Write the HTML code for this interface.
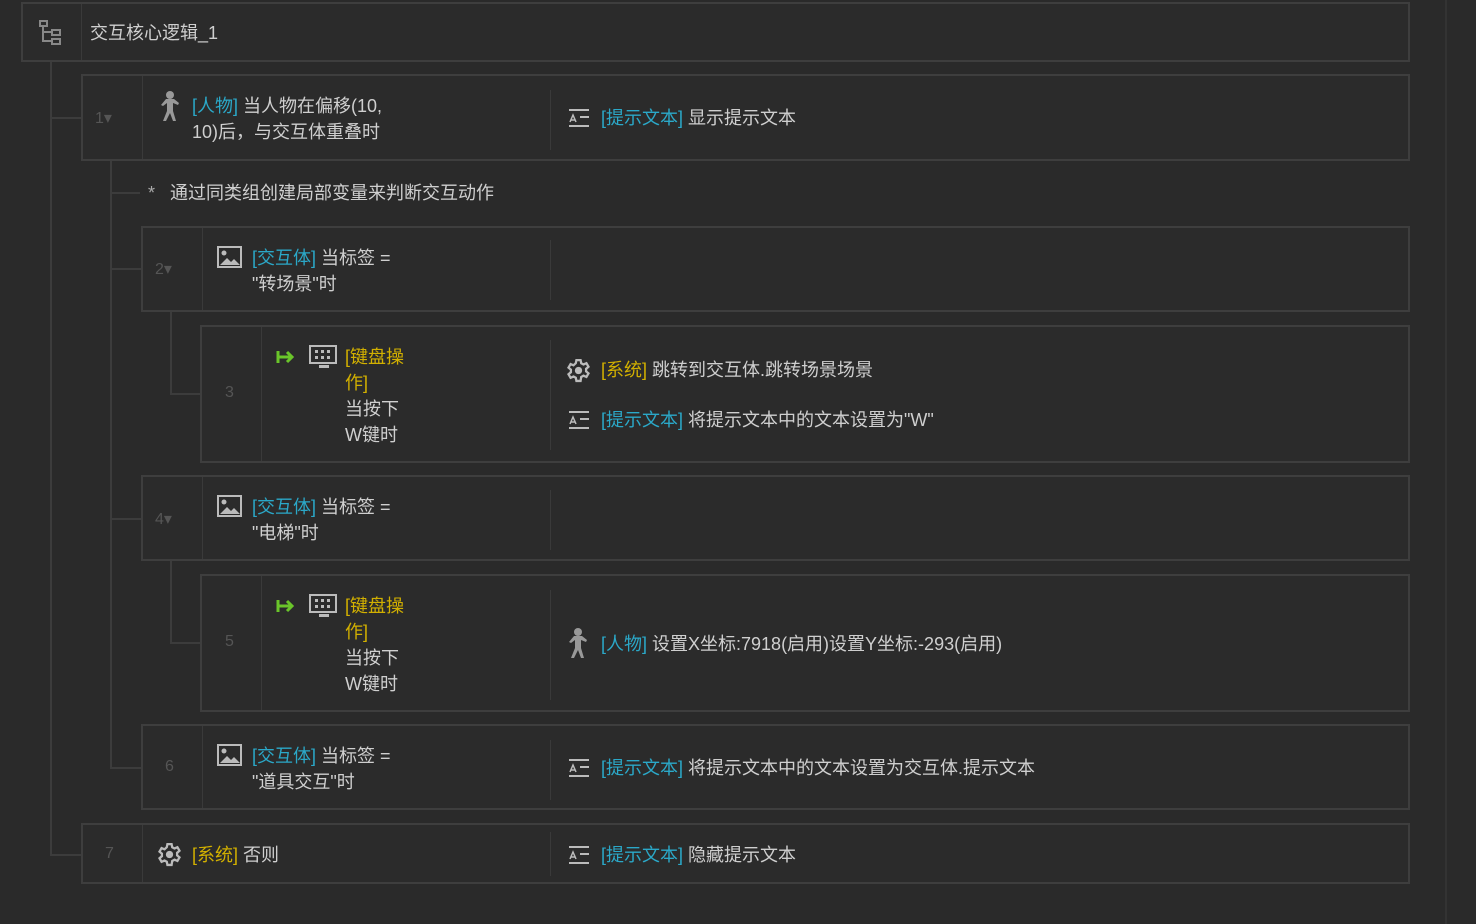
<!DOCTYPE html>
<html><head><meta charset="utf-8"><style>
body{margin:0;width:1476px;height:924px;background:#2a2a2a;overflow:hidden;position:relative;font-family:"Liberation Sans","Noto Sans CJK SC",sans-serif;font-size:18px;color:#cfcfcf}
.b{position:absolute;border:2px solid #3e3e3e;box-sizing:border-box;background:#2b2b2b}
.l{position:absolute;background:#3c3c3c}
.t{position:absolute;white-space:nowrap;line-height:26px}
.c{color:#2ba8c8}.y{color:#d2b000}
.n{position:absolute;color:#555;font-size:16px}
.v{position:absolute;width:1px;background:#3a3a3a}
svg{position:absolute}
</style></head><body>
<div class="l" style="left:1445px;top:0;width:2px;height:924px;background:#333"></div>
<div class="l" style="left:50px;top:61px;width:2px;height:795px"></div>
<div class="l" style="left:50px;top:117px;width:31px;height:2px"></div>
<div class="l" style="left:50px;top:854px;width:31px;height:2px"></div>
<div class="l" style="left:110px;top:160px;width:2px;height:609px"></div>
<div class="l" style="left:110px;top:192px;width:30px;height:2px"></div>
<div class="l" style="left:110px;top:268px;width:31px;height:2px"></div>
<div class="l" style="left:110px;top:518px;width:31px;height:2px"></div>
<div class="l" style="left:110px;top:767px;width:31px;height:2px"></div>
<div class="l" style="left:170px;top:311px;width:2px;height:84px"></div>
<div class="l" style="left:170px;top:393px;width:30px;height:2px"></div>
<div class="l" style="left:170px;top:560px;width:2px;height:84px"></div>
<div class="l" style="left:170px;top:642px;width:30px;height:2px"></div>

<div class="b" style="left:21px;top:2px;width:1389px;height:60px"></div>
<div class="v" style="left:81px;top:4px;height:56px"></div>
<svg style="left:38px;top:20px" width="28" height="26" viewBox="0 0 28 26"><g fill="none" stroke="#888" stroke-width="2"><rect x="2" y="1" width="7" height="5"/><rect x="14" y="10" width="8" height="5"/><rect x="14" y="19" width="8" height="5"/><path d="M5 6V21H14M5 12H14"/></g></svg>
<div class="t" style="left:90px;top:20px">交互核心逻辑_1</div>

<div class="b" style="left:81px;top:74px;width:1329px;height:87px"></div>
<div class="v" style="left:142px;top:76px;height:83px"></div>
<div class="v" style="left:550px;top:90px;height:60px"></div>
<div class="n" style="left:95px;top:108px">1▾</div>
<svg style="left:158px;top:90px" width="24" height="34" viewBox="0 0 24 34"><g fill="#999"><circle cx="12" cy="5" r="4"/><path d="M8 9h8l5 4-1 2-5-2v8l3 10h-3l-3-8-4 8H5l4-10V13l-4 3-2-1z"/></g></svg>
<div class="t" style="left:192px;top:93px"><span class="c">[人物]</span> 当人物在偏移(10,<br>10)后，与交互体重叠时</div>
<svg style="left:568px;top:108px" width="22" height="20" viewBox="0 0 22 20"><g fill="none" stroke="#bbb" stroke-width="2"><path d="M1 2h20M12 9h9M1 18h20"/><path d="M2 14l3-7 3 7M3 12h4" stroke-width="1.5"/></g></svg>
<div class="t" style="left:601px;top:105px"><span class="c">[提示文本]</span> 显示提示文本</div>

<div class="t" style="left:148px;top:180px;color:#aaa">*</div>
<div class="t" style="left:170px;top:180px">通过同类组创建局部变量来判断交互动作</div>

<div class="b" style="left:141px;top:226px;width:1269px;height:86px"></div>
<div class="v" style="left:202px;top:228px;height:82px"></div>
<div class="v" style="left:550px;top:240px;height:60px"></div>
<div class="n" style="left:155px;top:259px">2▾</div>
<svg style="left:217px;top:246px" width="25" height="22" viewBox="0 0 25 22"><rect x="1" y="1" width="23" height="20" fill="none" stroke="#bbb" stroke-width="2"/><circle cx="7" cy="7" r="2.5" fill="#bbb"/><path d="M3 19l7-7 4 4 3-3 6 6z" fill="#bbb"/></svg>
<div class="t" style="left:252px;top:245px"><span class="c">[交互体]</span> 当标签 =<br>"转场景"时</div>

<div class="b" style="left:200px;top:325px;width:1210px;height:138px"></div>
<div class="v" style="left:261px;top:327px;height:134px"></div>
<div class="v" style="left:550px;top:340px;height:110px"></div>
<div class="n" style="left:225px;top:384px">3</div>
<svg style="left:276px;top:348px" width="20" height="18" viewBox="0 0 20 18"><path d="M2 3v12M2 9h14M11 4l5 5-5 5" fill="none" stroke="#6ac52a" stroke-width="3"/></svg>
<svg style="left:309px;top:345px" width="28" height="24" viewBox="0 0 28 24"><rect x="1" y="1" width="26" height="17" fill="none" stroke="#bbb" stroke-width="2"/><g fill="#bbb"><rect x="6" y="5" width="3" height="3"/><rect x="12" y="5" width="3" height="3"/><rect x="18" y="5" width="3" height="3"/><rect x="6" y="11" width="3" height="3"/><rect x="12" y="11" width="3" height="3"/><rect x="18" y="11" width="3" height="3"/><rect x="10" y="20" width="10" height="3"/></g></svg>
<div class="t" style="left:345px;top:344px"><span class="y">[键盘操<br>作]</span><br>当按下<br>W键时</div>
<svg style="left:566px;top:358px" width="25" height="25" viewBox="0 0 24 24"><path fill="none" stroke="#bbb" stroke-width="2.2" d="M10 2h4l.6 3 2.2 1.2 2.8-1.2 2 3.4-2.3 2v2.4l2.3 2-2 3.4-2.8-1.2-2.2 1.2L14 22h-4l-.6-3-2.2-1.2-2.8 1.2-2-3.4 2.3-2v-2.4l-2.3-2 2-3.4 2.8 1.2L9.4 5z"/><circle cx="12" cy="12" r="3.5" fill="#bbb"/></svg>
<div class="t" style="left:601px;top:357px"><span class="y">[系统]</span> 跳转到交互体.跳转场景场景</div>
<svg style="left:568px;top:410px" width="22" height="20" viewBox="0 0 22 20"><g fill="none" stroke="#bbb" stroke-width="2"><path d="M1 2h20M12 9h9M1 18h20"/><path d="M2 14l3-7 3 7M3 12h4" stroke-width="1.5"/></g></svg>
<div class="t" style="left:601px;top:407px"><span class="c">[提示文本]</span> 将提示文本中的文本设置为"W"</div>

<div class="b" style="left:141px;top:475px;width:1269px;height:86px"></div>
<div class="v" style="left:202px;top:477px;height:82px"></div>
<div class="v" style="left:550px;top:490px;height:60px"></div>
<div class="n" style="left:155px;top:509px">4▾</div>
<svg style="left:217px;top:495px" width="25" height="22" viewBox="0 0 25 22"><rect x="1" y="1" width="23" height="20" fill="none" stroke="#bbb" stroke-width="2"/><circle cx="7" cy="7" r="2.5" fill="#bbb"/><path d="M3 19l7-7 4 4 3-3 6 6z" fill="#bbb"/></svg>
<div class="t" style="left:252px;top:494px"><span class="c">[交互体]</span> 当标签 =<br>"电梯"时</div>

<div class="b" style="left:200px;top:574px;width:1210px;height:138px"></div>
<div class="v" style="left:261px;top:576px;height:134px"></div>
<div class="v" style="left:550px;top:590px;height:110px"></div>
<div class="n" style="left:225px;top:633px">5</div>
<svg style="left:276px;top:597px" width="20" height="18" viewBox="0 0 20 18"><path d="M2 3v12M2 9h14M11 4l5 5-5 5" fill="none" stroke="#6ac52a" stroke-width="3"/></svg>
<svg style="left:309px;top:594px" width="28" height="24" viewBox="0 0 28 24"><rect x="1" y="1" width="26" height="17" fill="none" stroke="#bbb" stroke-width="2"/><g fill="#bbb"><rect x="6" y="5" width="3" height="3"/><rect x="12" y="5" width="3" height="3"/><rect x="18" y="5" width="3" height="3"/><rect x="6" y="11" width="3" height="3"/><rect x="12" y="11" width="3" height="3"/><rect x="18" y="11" width="3" height="3"/><rect x="10" y="20" width="10" height="3"/></g></svg>
<div class="t" style="left:345px;top:593px"><span class="y">[键盘操<br>作]</span><br>当按下<br>W键时</div>
<svg style="left:566px;top:627px" width="24" height="34" viewBox="0 0 24 34"><g fill="#999"><circle cx="12" cy="5" r="4"/><path d="M8 9h8l5 4-1 2-5-2v8l3 10h-3l-3-8-4 8H5l4-10V13l-4 3-2-1z"/></g></svg>
<div class="t" style="left:601px;top:631px"><span class="c">[人物]</span> 设置X坐标:7918(启用)设置Y坐标:-293(启用)</div>

<div class="b" style="left:141px;top:724px;width:1269px;height:86px"></div>
<div class="v" style="left:202px;top:726px;height:82px"></div>
<div class="v" style="left:550px;top:740px;height:60px"></div>
<div class="n" style="left:165px;top:758px">6</div>
<svg style="left:217px;top:744px" width="25" height="22" viewBox="0 0 25 22"><rect x="1" y="1" width="23" height="20" fill="none" stroke="#bbb" stroke-width="2"/><circle cx="7" cy="7" r="2.5" fill="#bbb"/><path d="M3 19l7-7 4 4 3-3 6 6z" fill="#bbb"/></svg>
<div class="t" style="left:252px;top:743px"><span class="c">[交互体]</span> 当标签 =<br>"道具交互"时</div>
<svg style="left:568px;top:758px" width="22" height="20" viewBox="0 0 22 20"><g fill="none" stroke="#bbb" stroke-width="2"><path d="M1 2h20M12 9h9M1 18h20"/><path d="M2 14l3-7 3 7M3 12h4" stroke-width="1.5"/></g></svg>
<div class="t" style="left:601px;top:755px"><span class="c">[提示文本]</span> 将提示文本中的文本设置为交互体.提示文本</div>

<div class="b" style="left:81px;top:823px;width:1329px;height:61px"></div>
<div class="v" style="left:142px;top:825px;height:57px"></div>
<div class="v" style="left:550px;top:832px;height:44px"></div>
<div class="n" style="left:105px;top:845px">7</div>
<svg style="left:157px;top:842px" width="25" height="25" viewBox="0 0 24 24"><path fill="none" stroke="#bbb" stroke-width="2.2" d="M10 2h4l.6 3 2.2 1.2 2.8-1.2 2 3.4-2.3 2v2.4l2.3 2-2 3.4-2.8-1.2-2.2 1.2L14 22h-4l-.6-3-2.2-1.2-2.8 1.2-2-3.4 2.3-2v-2.4l-2.3-2 2-3.4 2.8 1.2L9.4 5z"/><circle cx="12" cy="12" r="3.5" fill="#bbb"/></svg>
<div class="t" style="left:192px;top:842px"><span class="y">[系统]</span> 否则</div>
<svg style="left:568px;top:845px" width="22" height="20" viewBox="0 0 22 20"><g fill="none" stroke="#bbb" stroke-width="2"><path d="M1 2h20M12 9h9M1 18h20"/><path d="M2 14l3-7 3 7M3 12h4" stroke-width="1.5"/></g></svg>
<div class="t" style="left:601px;top:842px"><span class="c">[提示文本]</span> 隐藏提示文本</div>
</body></html>
